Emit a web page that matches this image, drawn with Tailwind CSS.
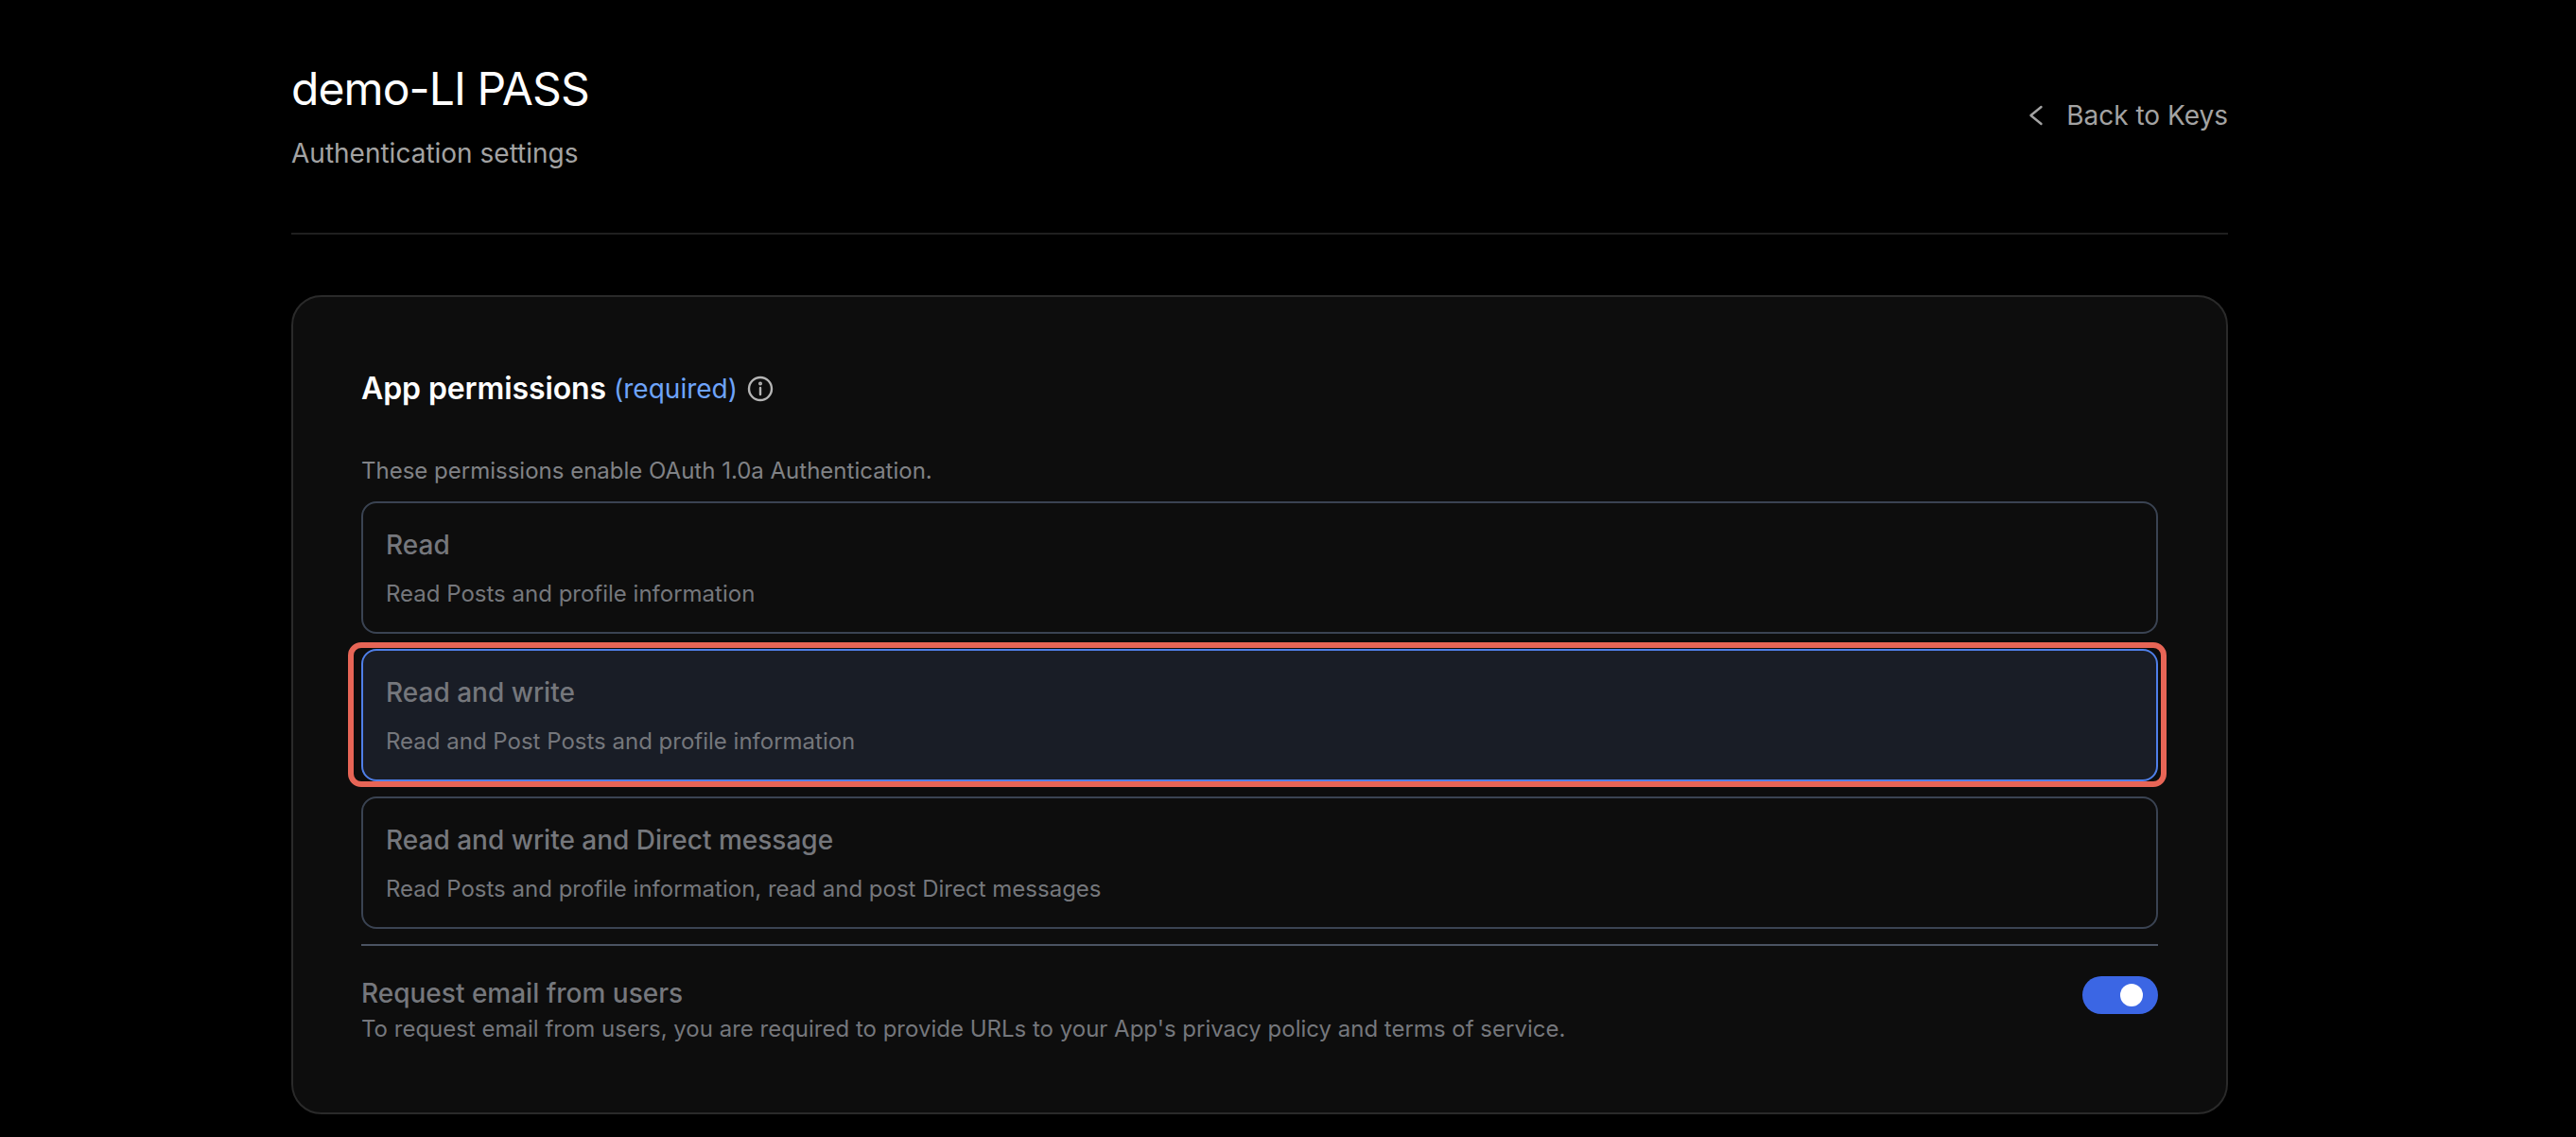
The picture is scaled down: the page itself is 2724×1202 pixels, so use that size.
<!DOCTYPE html>
<html lang="en">
<head>
  <meta charset="UTF-8" />
  <title>Authentication settings</title>
  <script src="https://cdn.jsdelivr.net/npm/@tailwindcss/browser@4"></script>
</head>
<body class="bg-black font-['Inter',sans-serif] text-white">
  <div class="h-[1202px] overflow-hidden pl-[308px]">
    <div class="w-[2048px]">

      <!-- Header -->
      <header class="flex h-[248px] items-start justify-between border-b-2 border-[#1f1f1f] pt-[62px]">
        <div>
          <h1 class="text-[48px] leading-[64px] font-normal tracking-[-0.9px]">demo-LI PASS</h1>
          <p class="mt-[16px] text-[28px] leading-[40px] text-[#a3a3a3]">Authentication settings</p>
        </div>
        <a class="mt-[40px] flex items-center gap-[24px] text-[28px] leading-[40px] text-[#a3a3a3]">
          <svg class="h-[24px] w-[16px]" viewBox="0 0 16 24" fill="none" stroke="currentColor" stroke-width="2.4" stroke-linecap="round" stroke-linejoin="round"><path d="M13.5 3 2.5 12l11 9"/></svg>
          Back to Keys
        </a>
      </header>

      <!-- Permissions card -->
      <section class="mt-[64px] h-[866px] rounded-[32px] border-2 border-[#2a2a2a] bg-[#0d0d0d] px-[72px] pt-[73px]">
        <div class="flex items-center">
          <h2 class="text-[32px] leading-[48px] font-semibold tracking-[-0.1px]">App permissions</h2>
          <span class="ml-[8px] text-[28px] leading-[48px] text-[#6ea4fb]">(required)</span>
          <svg class="ml-[10px] h-[28px] w-[28px] text-[#b5b5b5]" viewBox="0 0 28 28" fill="none" stroke="currentColor" stroke-width="2.4" stroke-linecap="round"><circle cx="14" cy="14" r="12"/><path d="M14 13v7"/><circle cx="14" cy="8.6" r="0.8"/></svg>
        </div>
        <p class="mt-[43px] text-[24px] leading-[40px] text-[#808286]">These permissions enable OAuth 1.0a Authentication.</p>

        <div class="mt-[12px] flex flex-col gap-[16px]">
          <div class="h-[140px] rounded-[16px] border-2 border-[#3a4352] px-[24px] pt-[24px]">
            <h3 class="text-[28px] leading-[40px] font-medium text-[#75777c]">Read</h3>
            <p class="mt-[14px] text-[24px] leading-[36px] text-[#75777c]">Read Posts and profile information</p>
          </div>
          <div class="relative h-[140px] rounded-[16px] border-2 border-[#4f7fe8] bg-[#191d26] px-[24px] pt-[24px]">
            <h3 class="text-[28px] leading-[40px] font-medium text-[#75777c]">Read and write</h3>
            <p class="mt-[14px] text-[24px] leading-[36px] text-[#75777c]">Read and Post Posts and profile information</p>
            <div class="absolute top-[-9px] left-[-16px] h-[153px] w-[1923px] rounded-[14px] border-[6px] border-[#e76556]"></div>
          </div>
          <div class="h-[140px] rounded-[16px] border-2 border-[#3a4352] px-[24px] pt-[24px]">
            <h3 class="text-[28px] leading-[40px] font-medium text-[#75777c]">Read and write and Direct message</h3>
            <p class="mt-[14px] text-[24px] leading-[36px] text-[#75777c]">Read Posts and profile information, read and post Direct messages</p>
          </div>
        </div>

        <!-- Email toggle -->
        <div class="mt-[16px] flex items-start justify-between border-t-2 border-[#4a5362] pt-[32px]">
          <div>
            <h3 class="text-[28px] leading-[36px] font-medium text-[#75777c]">Request email from users</h3>
            <p class="mt-[2px] text-[24px] leading-[36px] text-[#75777c]">To request email from users, you are required to provide URLs to your App's privacy policy and terms of service.</p>
          </div>
          <div class="relative h-[40px] w-[80px] rounded-full bg-[#3b66e4]">
            <span class="absolute top-[8px] right-[16px] h-[24px] w-[24px] rounded-full bg-white"></span>
          </div>
        </div>
      </section>
    </div>
  </div>
</body>
</html>
